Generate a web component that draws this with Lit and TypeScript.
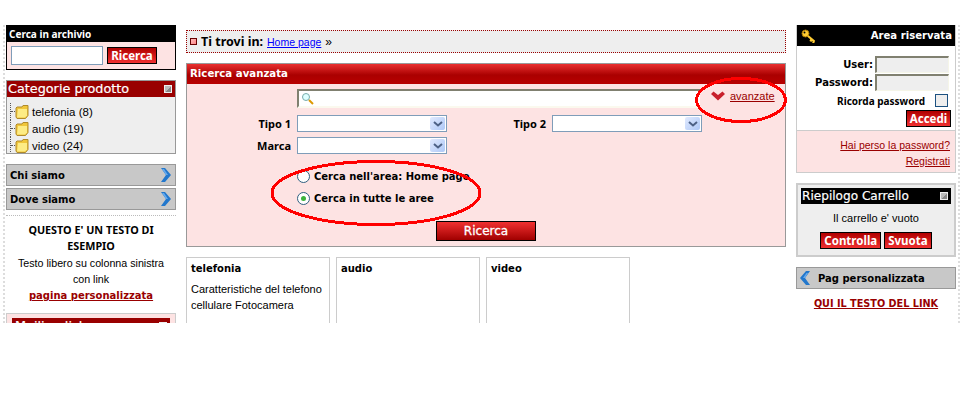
import { LitElement, html, css, svg } from "lit";
import { customElement } from "lit/decorators.js";

const folder = html`<svg class="folder" width="14" height="15" viewBox="0 0 14 15"><path d="M1 4V13L2 14.500H10.500L13 11.500V1.500H8L7 3H2Z" fill="#f0c63a" stroke="#b08a2a"/><path d="M3 5H12V11.500L10 13.500H2Z" fill="#fdec85"/></svg>`;
const bullet = html`<svg class="sq" width="8" height="8" viewBox="0 0 8 8"><rect width="8" height="8" fill="#eee"/><path d="M1 7L7 1V7Z" fill="#888"/><path d="M1 1H7L1 7Z" fill="#bbb"/></svg>`;
const chevR = html`<svg width="12" height="14" viewBox="0 0 12 14"><path d="M1 0H5L11 7L5 14H1L6 7Z" fill="#2277cc"/><path d="M2 1H4L8 7H6Z" fill="#66aaee"/></svg>`;
const chevL = html`<svg width="12" height="14" viewBox="0 0 12 14"><path d="M11 0H7L1 7L7 14H11L6 7Z" fill="#2277cc"/><path d="M9 2H7.500L4 7H6Z" fill="#66aaee"/></svg>`;
const arrow = html`<span class="sel-btn"><svg width="10" height="6" viewBox="0 0 10 6"><path d="M1 1L5 4.500L9 1" fill="none" stroke="#4d6185" stroke-width="2"/></svg></span>`;
const select = html`<div class="select">${arrow}</div>`;

@customElement("app-root")
export class AppRoot extends LitElement {
  static styles = css`
    :host { display: block; height: 400px; background: #fff; font: 11px "Liberation Sans", sans-serif; color: #000; }
    a { color: #900; }
    .page { position: relative; height: 323px; overflow: hidden; display: grid; grid-template-columns: 170px 600px 160px; column-gap: 10px; padding: 25px 0 0 6px; box-sizing: border-box; width: 964px; }
    .page::before, .page::after { content: ""; position: absolute; top: 25px; bottom: 0; border-left: 2px dotted #ddd; }
    .page::before { left: 3px; }
    .page::after { left: 958px; }
    .b { font-family: "DejaVu Sans", sans-serif; font-weight: 700; font-size: 10px; }
    .n { font-family: "Noto Sans", sans-serif; font-weight: 700; }
    .btn { display: inline-flex; align-items: center; justify-content: center; box-sizing: border-box; border: 1px solid #000; color: #fff; font: 700 11.500px "Noto Sans", sans-serif; background: linear-gradient(#b00000, #f03030); height: 17px; padding: 0 3px; }
    .left, .right { display: flex; flex-direction: column; }
    .search { border: 1px solid #000; border-top: 0; background: #fde3e3; height: 45px; box-sizing: border-box; }
    .search h3 { margin: 0 -1px; background: #000; color: #fff; font: 700 10px "Noto Sans", sans-serif; height: 17px; line-height: 18px; padding-left: 3px; }
    .search .row { display: flex; gap: 4px; padding: 4px 0 0 4px; align-items: center; }
    .search input { box-sizing: border-box; width: 92px; height: 19px; border: 1px solid #7f9db9; padding: 0; background: #fff; }
    .search .btn { width: 50px; height: 17px; }
    .cat { margin-top: 10px; border: 1px solid #999; background: #eee; height: 74px; box-sizing: border-box; overflow: hidden; }
    .cat h3 { margin: 0; background: #900; color: #fff; font: 400 12.800px "DejaVu Sans", sans-serif; -webkit-text-stroke: .2px #fff; height: 16px; line-height: 16px; padding: 0 3px 0 1px; display: flex; justify-content: space-between; align-items: center; white-space: nowrap; }
    .tree { list-style: none; margin: 0; padding: 6px 0 0 3px; }
    .tree li { display: flex; align-items: center; height: 17px; gap: 3px; font-size: 11.500px; border-left: 1px dotted #555; }
    .tree li::before { content: ""; width: 4px; border-top: 1px dotted #555; margin-right: -3px; }
    .folder { flex: none; }
    .nav { box-sizing: border-box; height: 22px; background: #c8c8c8; border: 1px solid #999; display: flex; justify-content: space-between; align-items: center; padding: 0 3px; font-size: 10px; }
    .nav.two { margin-top: 2px; }
    .nav.first { margin-top: 10px; }
    .free { margin-top: 5px; border-top: 1px dotted #bbb; padding-top: 6px; text-align: center; line-height: 16.300px; font-size: 10.700px; }
    .free .n { font-size: 10.800px; }
    .free a { font-family: "DejaVu Sans", sans-serif; font-weight: 700; font-size: 10px; }
    .mail { margin-top: 9px; border: 1px solid #ccc; background: #fde3e3; padding: 4px 5px; }
    .mail h3 { margin: 0; background: #900; color: #fff; font: 400 12.800px "DejaVu Sans", sans-serif; -webkit-text-stroke: .2px #fff; height: 16px; line-height: 16px; padding: 0 3px; display: flex; justify-content: space-between; align-items: center; }
    .center { display: flex; flex-direction: column; padding-top: 5px; }
    .crumb { box-sizing: border-box; height: 23px; background: #eee; border: 1px dotted #900; display: flex; align-items: center; gap: 4px; padding-left: 3px; font-size: 12px; }
    .crumb .sq2 { width: 5px; height: 5px; border: 1px solid #600; background: linear-gradient(135deg, #fbb, #f88); flex: none; }
    .crumb b { font: 700 12.500px "Noto Sans", sans-serif; }
    .crumb a { color: #00f; font-size: 10.500px; }
    .panel { margin-top: 10px; border: 1px solid #999; height: 184px; box-sizing: border-box; background: #fde3e3; }
    .panel h3 { margin: 0; height: 20px; box-sizing: border-box; padding-left: 3px; color: #fff; font: 700 10.200px/19px "DejaVu Sans", sans-serif; background: linear-gradient(#e93030 0, #a00 55%, #b80000 100%); }
    .body { padding: 5px 0 0 110px; display: flex; flex-direction: column; }
    .sinput { box-sizing: border-box; width: 403px; height: 19px; background: #fff; border: 2px solid #808070; border-right: 0; border-bottom: 2px solid #fbf9ee; display: flex; align-items: center; padding-left: 2px; }
    .fr { display: flex; align-items: center; margin-top: 5px; }
    .fr.first { margin-top: 7px; }
    .lab { width: 104px; margin-left: -110px; margin-right: 6px; text-align: right; font-size: 11px; flex: none; }
    .lab2 { width: 99px; margin-right: 6px; text-align: right; font-size: 11px; flex: none; }
    .select { box-sizing: border-box; width: 150px; height: 17px; background: #fff; border: 1px solid #7f9db9; display: flex; justify-content: flex-end; align-items: center; padding-right: 1px; flex: none; }
    .sel-btn { width: 15px; height: 13px; background: linear-gradient(135deg, #e1eafe, #aec8f7); border-radius: 2px; display: flex; align-items: center; justify-content: center; }
    .radios { display: flex; flex-direction: column; gap: 9px; margin-top: 16px; }
    .radio { display: flex; align-items: center; gap: 4px; height: 13px; font-size: 10px; white-space: nowrap; }
    .rc { box-sizing: border-box; width: 13px; height: 13px; border-radius: 50%; border: 1px solid #2f5f7f; background: #fff; display: flex; align-items: center; justify-content: center; flex: none; }
    .rc.on::after { content: ""; width: 5px; height: 5px; border-radius: 50%; background: #3db33d; }
    .panel .go { display: flex; width: 100px; height: 20px; margin: 16px 0 0 139px; background: linear-gradient(#f03030, #a00000); font: 400 12px "DejaVu Sans", sans-serif; -webkit-text-stroke: .3px #fff; }
    .adv { position: absolute; left: 711px; top: 90px; display: flex; gap: 5px; align-items: center; font-size: 11px; }
    .ell { position: absolute; left: 0; top: 0; pointer-events: none; }
    .cards { display: flex; gap: 6px; margin-top: 10px; }
    .card { box-sizing: border-box; width: 144px; height: 100px; border: 1px solid #ccc; padding: 4px; line-height: 16px; }
    .card .b { display: block; margin-bottom: 5px; line-height: 14px; }
    .login { border: 1px solid #ccc; border-top: 0; }
    .login h3 { margin: 0; background: #000; color: #fff; height: 21px; display: flex; justify-content: space-between; align-items: center; padding: 0 3px 0 4px; font: 700 10.100px "DejaVu Sans", sans-serif; }
    .lf { display: flex; justify-content: flex-end; align-items: center; gap: 2px; padding-right: 6px; height: 18px; font: 700 10px "DejaVu Sans", sans-serif; }
    .lf input { box-sizing: border-box; width: 74px; height: 17px; border: 2px solid #808070; border-right: 1px solid #f5f5e8; border-bottom: 1px solid #f5f5e8; background: #eee; padding: 0; }
    .fields-l { padding-top: 9px; }
    .rem { display: flex; justify-content: flex-end; align-items: center; gap: 10px; font-size: 10px; height: 19px; padding-right: 7px; }
    .chk { box-sizing: border-box; width: 13px; height: 13px; border: 1px solid #1c5180; background: #eee; }
    .acc { display: flex; justify-content: flex-end; padding: 0 4px 0 0; }
    .acc .btn { width: 45px; height: 17px; }
    .links { background: #fde3e3; border-top: 1px solid #ccc; margin-top: 3px; height: 42px; text-align: right; padding: 6px 5px 0 0; box-sizing: border-box; line-height: 16px; font-size: 10.500px; }
    .links a { display: block; }
    .cart { margin-top: 10px; border: 2px solid #ccc; background: #eee; height: 74px; box-sizing: border-box; padding: 3px 3px 0 3px; text-align: center; font-size: 11px; }
    .cart h3 { margin: 0; background: #000; color: #fff; height: 16px; font: 400 12.100px/16px "DejaVu Sans", sans-serif; -webkit-text-stroke: .2px #fff; display: flex; justify-content: space-between; align-items: center; padding: 0 3px 0 1px; white-space: nowrap; overflow: hidden; }
    .cart p { margin: 8px 0 0; }
    .cart .bs { display: flex; gap: 3px; justify-content: center; margin-top: 8px; }
    .cart .btn { height: 17px; padding: 0 3px; }
    .pag { margin-top: 10px; justify-content: flex-start; gap: 7px; padding: 0 0 0 2px; }
    .lk { display: block; text-align: center; margin-top: 9px; font: 700 9.700px "DejaVu Sans", sans-serif; white-space: nowrap; }
  `;
  render() {
    return html`<div class="page">
      <div class="left">
        <div class="search">
          <h3>Cerca in archivio</h3>
          <div class="row"><input /><span class="btn">Ricerca</span></div>
        </div>
        <div class="cat">
          <h3>Categorie prodotto ${bullet}</h3>
          <ul class="tree">
            <li>${folder} telefonia (8)</li>
            <li>${folder} audio (19)</li>
            <li>${folder} video (24)</li>
          </ul>
        </div>
        <div class="nav b first">Chi siamo ${chevR}</div>
        <div class="nav b two">Dove siamo ${chevR}</div>
        <div class="free">
          <div class="n">QUESTO E' UN TESTO DI ESEMPIO</div>
          <div>Testo libero su colonna sinistra<br />con link</div>
          <a href="#">pagina personalizzata</a>
        </div>
        <div class="mail"><h3>Mailing list ${bullet}</h3></div>
      </div>
      <div class="center">
        <div class="crumb"><span class="sq2"></span><b>Ti trovi in:</b> <a href="#">Home page</a> »</div>
        <div class="panel">
          <h3>Ricerca avanzata</h3>
          <div class="body">
            <div class="sinput"><svg width="13" height="13" viewBox="0 0 13 13"><circle cx="5" cy="5" r="3.500" fill="#dff" stroke="#7aa"/><path d="M8 8L12 12" stroke="#d90" stroke-width="2"/></svg></div>
            <div class="fr first"><span class="lab n">Tipo 1</span>${select}<span class="lab2 n">Tipo 2</span>${select}</div>
            <div class="fr"><span class="lab n">Marca</span>${select}</div>
            <div class="radios">
              <label class="radio b"><span class="rc"></span>Cerca nell'area: Home page</label>
              <label class="radio b"><span class="rc on"></span>Cerca in tutte le aree</label>
            </div>
            <span class="btn go">Ricerca</span>
          </div>
        </div>
        <div class="cards">
          <div class="card"><span class="b">telefonia</span>Caratteristiche del telefono cellulare Fotocamera</div>
          <div class="card"><span class="b">audio</span></div>
          <div class="card"><span class="b">video</span></div>
        </div>
      </div>
      <div class="right">
        <div class="login">
          <h3><svg width="15" height="14" viewBox="0 0 15 14"><circle cx="4.500" cy="4.500" r="3.500" fill="#fc3" stroke="#a70"/><circle cx="3.500" cy="3.500" r="1" fill="#000"/><path d="M7 7L13.500 12.500M10.500 10L9.500 12.500M13 12L12 14" stroke="#fc3" stroke-width="2.200" fill="none"/></svg>Area riservata</h3>
          <div class="fields-l">
            <div class="lf">User: <input /></div>
            <div class="lf">Password: <input type="password" /></div>
          </div>
          <div class="rem n">Ricorda password <span class="chk"></span></div>
          <div class="acc"><span class="btn">Accedi</span></div>
          <div class="links"><a href="#">Hai perso la password?</a><a href="#">Registrati</a></div>
        </div>
        <div class="cart">
          <h3>Riepilogo Carrello ${bullet}</h3>
          <p>Il carrello e' vuoto</p>
          <div class="bs"><span class="btn">Controlla</span><span class="btn">Svuota</span></div>
        </div>
        <div class="nav b pag">${chevL} Pag personalizzata</div>
        <a class="lk" href="#">QUI IL TESTO DEL LINK</a>
      </div>
      <div class="adv">
        <svg width="14" height="10" viewBox="0 0 14 10"><path d="M0 3L2.500 .5L7 4L11.500 .5L14 3L7 9.500Z" fill="#c8202c"/></svg>
        <a href="#">avanzate</a>
      </div>
      <svg class="ell" width="964" height="323" viewBox="0 0 964 323">${svg`
        <ellipse cx="741" cy="100" rx="44.500" ry="21.500" fill="none" stroke="#f00" stroke-width="3" shape-rendering="crispEdges"/>
        <ellipse cx="376" cy="193" rx="104" ry="31.500" fill="none" stroke="#f00" stroke-width="3" shape-rendering="crispEdges"/>`}</svg>
    </div>`;
  }
}
